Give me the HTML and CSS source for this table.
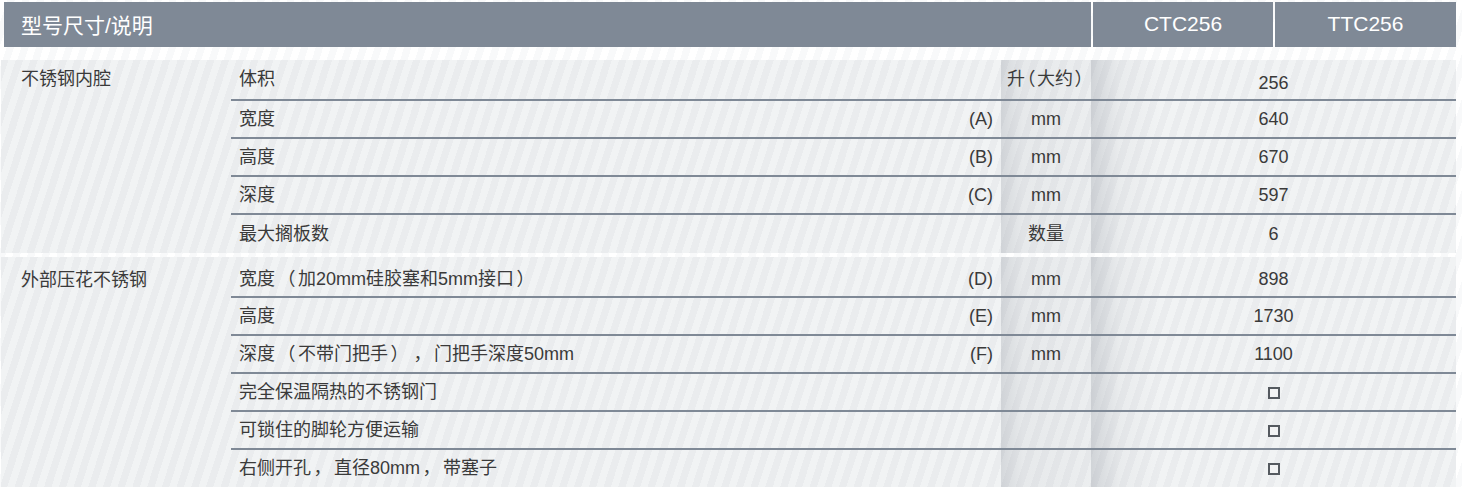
FILE: index.html
```html
<!DOCTYPE html>
<html lang="zh-CN">
<head>
<meta charset="utf-8">
<title>型号尺寸/说明</title>
<link rel="stylesheet" href="styles.css">
</head>
<body>
<div class="sheet">
  <div class="head">
    <div class="h-title">型号尺寸/说明</div>
    <div class="h-model">CTC256</div>
    <div class="h-model">TTC256</div>
  </div>

  <section class="group first">
    <div class="cat">不锈钢内腔</div>
    <div class="rows">
      <div class="row"><div class="lbl"><span>体积</span><span class="key"></span></div><div class="unit halt">升<span class="ph">（</span>大约<span class="ph">）</span></div><div class="val num">256</div></div>
      <div class="row"><div class="lbl"><span>宽度</span><span class="key">(A)</span></div><div class="unit">mm</div><div class="val">640</div></div>
      <div class="row"><div class="lbl"><span>高度</span><span class="key">(B)</span></div><div class="unit">mm</div><div class="val">670</div></div>
      <div class="row"><div class="lbl"><span>深度</span><span class="key">(C)</span></div><div class="unit">mm</div><div class="val">597</div></div>
      <div class="row"><div class="lbl"><span>最大搁板数</span><span class="key"></span></div><div class="unit">数量</div><div class="val">6</div></div>
    </div>
  </section>

  <section class="group second">
    <div class="cat">外部压花不锈钢</div>
    <div class="rows">
      <div class="row"><div class="lbl"><span>宽度<span class="pu">（</span>加20mm硅胶塞和5mm接口<span class="pu">）</span></span><span class="key">(D)</span></div><div class="unit">mm</div><div class="val">898</div></div>
      <div class="row"><div class="lbl"><span>高度</span><span class="key">(E)</span></div><div class="unit">mm</div><div class="val">1730</div></div>
      <div class="row"><div class="lbl"><span>深度<span class="pu">（</span>不带门把手<span class="pu">）</span><span class="pu">，</span>门把手深度50mm</span><span class="key">(F)</span></div><div class="unit">mm</div><div class="val">1100</div></div>
      <div class="row"><div class="lbl"><span>完全保温隔热的不锈钢门</span><span class="key"></span></div><div class="unit"></div><div class="val"><span class="box"></span></div></div>
      <div class="row"><div class="lbl"><span>可锁住的脚轮方便运输</span><span class="key"></span></div><div class="unit"></div><div class="val"><span class="box"></span></div></div>
      <div class="row"><div class="lbl"><span>右侧开孔<span class="pu">，</span>直径80mm<span class="pu">，</span>带塞子</span><span class="key"></span></div><div class="unit"></div><div class="val"><span class="box"></span></div></div>
    </div>
  </section>
</div>
</body>
</html>
```

FILE: styles.css
```css
* { box-sizing: border-box; }

body {
  margin: 0;
  background: #fff;
  font-family: "Liberation Sans", "Noto Sans CJK SC", sans-serif;
  color: #3a3a3a;
}

.sheet {
  width: 1462px;
  height: 487px;
  padding-top: 2px;
  overflow: hidden;
  background: repeating-linear-gradient(108deg, #ffffff 0 7px, #f8f9fa 7px 14px);
}

.head {
  display: grid;
  grid-template-columns: 1087px 180px 181px;
  column-gap: 2px;
  margin-left: 4px;
  width: 1452px;
  height: 45px;
  color: #fff;
  font-size: 21px;
}

.h-title,
.h-model {
  background: #7f8996;
  display: flex;
  align-items: center;
}

.h-title { padding-left: 17px; padding-bottom: 1px; }
.h-model { justify-content: center; padding-bottom: 2px; }

.group {
  display: grid;
  grid-template-columns: 230px 1225px;
  margin-left: 1px;
  width: 1455px;
  background:
    repeating-linear-gradient(108deg, rgba(255,255,255,0) 0 7px, rgba(255,255,255,0.35) 7px 14px),
    #eaecee;
  font-size: 18px;
  line-height: 20px;
}

.group.first { margin-top: 13px; }
.group.second { margin-top: 3.4px; }

.cat { padding-left: 20px; }
.first .cat { padding-top: 9px; }
.second .cat { padding-top: 13px; }

.rows { display: grid; }
.first .rows { grid-template-rows: 40.5px repeat(4, 38.2px); }
.second .rows { grid-template-rows: 41.3px repeat(4, 38px) 37px; }

.row {
  display: grid;
  grid-template-columns: 770px 90px 365px;
  border-bottom: 2px solid #7f8996;
}

.row:last-child { border-bottom: 0; }

.second .row:first-child > div { padding-top: 5px; }

.lbl,
.unit,
.val {
  display: flex;
  align-items: center;
}

.lbl {
  justify-content: space-between;
  padding-left: 8px;
  padding-right: 8px;
}

.pu {
  display: inline-block;
  padding: 0 2.5px;
}

.ph {
  display: inline-block;
  padding: 0 1.5px;
}

.unit {
  justify-content: center;
  background: linear-gradient(90deg, rgba(140,146,156,0.28) 0, rgba(140,146,156,0.10) 22px, rgba(140,146,156,0.05) 100%);
}

.halt { font-feature-settings: "halt"; }

.val {
  justify-content: center;
  background: linear-gradient(90deg, rgba(140,146,156,0.32) 0, rgba(140,146,156,0.08) 28px, rgba(140,146,156,0) 70px);
}

.val.num { padding-top: 8px; }

.box {
  display: inline-block;
  width: 12px;
  height: 12px;
  border: 2px solid #555a60;
  background: #f2f3f4;
  margin-top: 2px;
}
```
